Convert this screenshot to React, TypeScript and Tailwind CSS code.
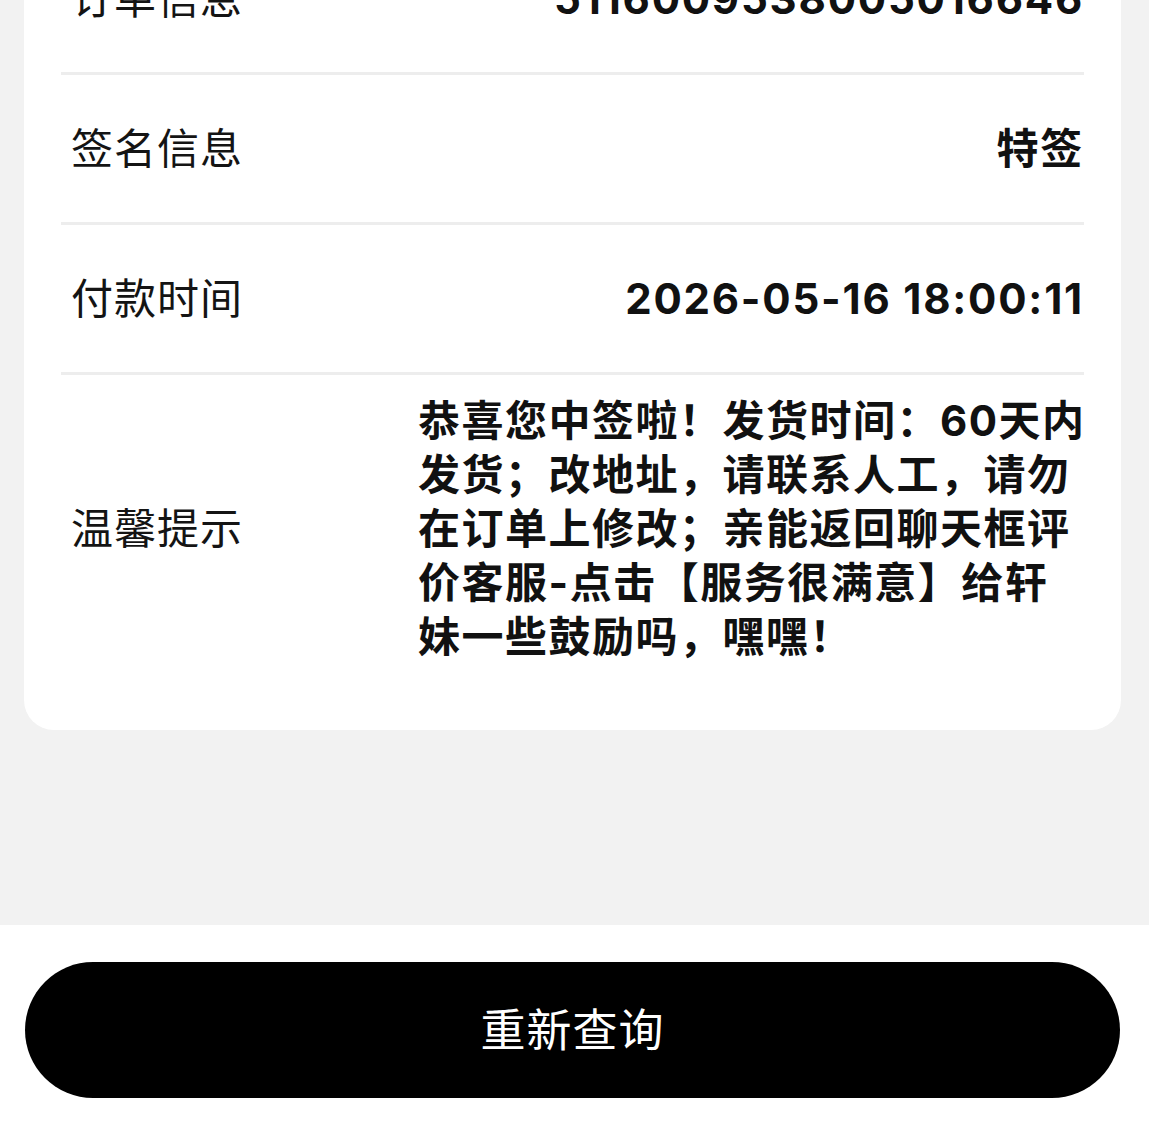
import React from "react";

/* ------------------------------------------------------------------ */
/*  Data                                                               */
/* ------------------------------------------------------------------ */

const rows = [
  { label: "订单信息", value: "5116009538005016646" },
  { label: "签名信息", value: "特签" },
  { label: "付款时间", value: "2026-05-16 18:00:11" },
];

const tipLines = [
  "恭喜您中签啦！发货时间：60天内",
  "发货；改地址，请联系人工，请勿",
  "在订单上修改；亲能返回聊天框评",
  "价客服-点击【服务很满意】给轩",
  "妹一些鼓励吗，嘿嘿！",
];

/* ------------------------------------------------------------------ */
/*  Component                                                          */
/* ------------------------------------------------------------------ */

export default function App() {
  return (
    <div
      className="flex min-h-[1143px] w-full flex-col bg-white"
      style={{ fontFamily: "Inter, 'Noto Sans CJK SC', sans-serif" }}
    >
      {/* Scroll area */}
      <div className="h-[925px] overflow-hidden bg-[#f2f2f2]">
        <div className="ml-[24px] mr-[28px] mt-[-75px] rounded-b-[30px] bg-white px-[37px] pb-[66px]">
          {rows.map((r) => (
            <div
              key={r.label}
              className="flex h-[150px] items-center justify-between border-b-[3px] border-[#ededed] pl-[10px] pr-0"
            >
              <span className="text-[42px] leading-none tracking-[1px] text-[#141414]">
                {r.label}
              </span>
              <span className="text-[42px] font-bold leading-none tracking-[1.8px] text-[#111]">
                {r.value}
              </span>
            </div>
          ))}

          {/* Tip */}
          <div className="flex items-center justify-between pl-[10px] pt-[19px]">
            <span className="text-[42px] leading-none tracking-[1px] text-[#141414]">
              温馨提示
            </span>
            <div className="w-[666px] text-[42px] font-bold leading-[54px] tracking-[1.5px] text-[#111]">
              {tipLines.map((l) => (
                <div key={l} className="whitespace-nowrap">
                  {l}
                </div>
              ))}
            </div>
          </div>
        </div>
      </div>

      {/* Bottom bar */}
      <div className="flex-1 bg-white pl-[25px] pr-[29px] pt-[37px]">
        <button
          type="button"
          className="flex h-[136px] w-full items-center justify-center rounded-full bg-black text-[45px] leading-none tracking-[1px] text-white"
        >
          重新查询
        </button>
      </div>
    </div>
  );
}
